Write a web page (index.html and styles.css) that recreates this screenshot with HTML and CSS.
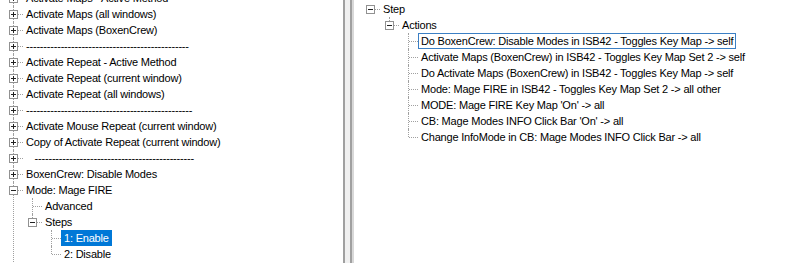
FILE: index.html
```html
<!DOCTYPE html>
<html>
<head>
    <link rel="stylesheet" href="styles.css">
    <title>Macro Tree</title>
</head>
<body>
<div class="window">
    <div class="pane left">
        <ul class="tree scrolled">
            <li><span class="box plus"></span><span class="label">Activate Maps - Active Method</span></li>
            <li><span class="box plus"></span><span class="label">Activate Maps (all windows)</span></li>
            <li><span class="box plus"></span><span class="label">Activate Maps (BoxenCrew)</span></li>
            <li><span class="box plus"></span><span class="label">-----------------------------------------------</span></li>
            <li><span class="box plus"></span><span class="label">Activate Repeat - Active Method</span></li>
            <li><span class="box plus"></span><span class="label">Activate Repeat (current window)</span></li>
            <li><span class="box plus"></span><span class="label">Activate Repeat (all windows)</span></li>
            <li><span class="box plus"></span><span class="label">------------------------------------------------</span></li>
            <li><span class="box plus"></span><span class="label">Activate Mouse Repeat (current window)</span></li>
            <li><span class="box plus"></span><span class="label">Copy of Activate Repeat (current window)</span></li>
            <li><span class="box plus"></span><span class="label">   ----------------------------------------------</span></li>
            <li><span class="box plus"></span><span class="label">BoxenCrew: Disable Modes</span></li>
            <li><span class="box minus"></span><span class="label">Mode: Mage FIRE</span>
                <ul>
                    <li><span class="label">Advanced</span></li>
                    <li class="last"><span class="box minus"></span><span class="label">Steps</span>
                        <ul>
                            <li><span class="label selected">1: Enable</span></li>
                            <li class="last"><span class="label">2: Disable</span></li>
                        </ul>
                    </li>
                </ul>
            </li>
        </ul>
    </div>
    <div class="splitter"></div>
    <div class="pane right">
        <ul class="tree">
            <li class="only"><span class="box minus"></span><span class="label">Step</span>
                <ul>
                    <li class="last"><span class="box minus"></span><span class="label">Actions</span>
                        <ul>
                            <li><span class="label focused">Do BoxenCrew: Disable Modes in ISB42 - Toggles Key Map -&gt; self</span></li>
                            <li><span class="label">Activate Maps (BoxenCrew) in ISB42 - Toggles Key Map Set 2 -&gt; self</span></li>
                            <li><span class="label">Do Activate Maps (BoxenCrew) in ISB42 - Toggles Key Map -&gt; self</span></li>
                            <li><span class="label">Mode: Mage FIRE in ISB42 - Toggles Key Map Set 2 -&gt; all other</span></li>
                            <li><span class="label">MODE: Mage FIRE Key Map 'On' -&gt; all</span></li>
                            <li><span class="label">CB: Mage Modes INFO Click Bar 'On' -&gt; all</span></li>
                            <li class="last"><span class="label">Change InfoMode in CB: Mage Modes INFO Click Bar -&gt; all</span></li>
                        </ul>
                    </li>
                </ul>
            </li>
        </ul>
    </div>
</div>
</body>
</html>
```

FILE: styles.css
```css
body {
    margin: 0;
    background: #fff;
    font-family: "Liberation Sans", Arial, sans-serif;
    font-size: 11px;
    letter-spacing: -0.2px;
    color: #000;
}
.window {
    display: flex;
    height: 263px;
    overflow: hidden;
}
.pane {
    background: #fff;
    overflow: hidden;
}
.left {
    width: 343px;
    border-right: 2px solid #a0a0a0;
}
.splitter {
    width: 5px;
    background: #f0f0f0;
}
.right {
    flex: 1;
    border-left: 2px solid #a0a0a0;
    box-shadow: inset 2px 0 0 #d8d8d8;
    padding-left: 5px;
    padding-top: 1px;
}

/* tree view */
.tree, .tree ul {
    list-style: none;
    margin: 0;
    padding: 0;
}
.tree ul {
    margin-left: -4px;
}
.tree.scrolled {
    margin-top: -10px;
}
.tree li {
    position: relative;
    padding-left: 23px;
}
.tree li::before {
    content: "";
    position: absolute;
    left: 13px;
    top: 0;
    bottom: 0;
    border-left: 1px dotted #a0a0a0;
}
.tree li.last::before {
    bottom: auto;
    height: 8px;
}
.tree li.only::before {
    display: none;
}
.tree li::after {
    content: "";
    position: absolute;
    left: 14px;
    top: 8px;
    width: 9px;
    border-top: 1px dotted #a0a0a0;
}
.label {
    display: inline-block;
    vertical-align: top;
    height: 14px;
    line-height: 14px;
    border: 1px solid transparent;
    padding: 0 2px;
    white-space: pre;
}
.label.selected {
    background: #0078d7;
    border-color: #0078d7;
    color: #fff;
}
.label.focused {
    border-color: #3b7fc4;
}
.box {
    position: absolute;
    z-index: 1;
    left: 9px;
    top: 4px;
    width: 7px;
    height: 7px;
    border: 1px solid #919191;
    background: #fff;
}
.box::before {
    content: "";
    position: absolute;
    left: 1px;
    top: 3px;
    width: 5px;
    height: 1px;
    background: #222;
}
.box.plus::after {
    content: "";
    position: absolute;
    left: 3px;
    top: 1px;
    width: 1px;
    height: 5px;
    background: #222;
}
```
